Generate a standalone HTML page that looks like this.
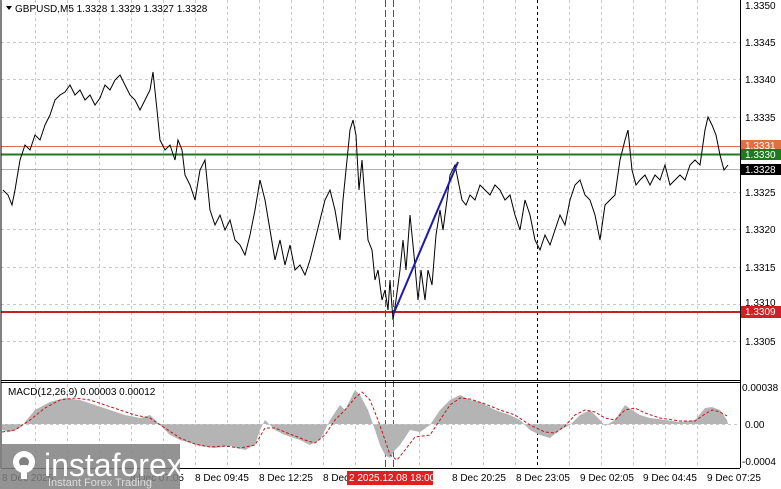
<!DOCTYPE html>
<html><head><meta charset="utf-8"><style>
html,body{margin:0;padding:0;background:#fff;width:781px;height:489px;overflow:hidden}
svg{display:block}
text{font-family:"Liberation Sans",sans-serif;font-size:10px;fill:#000}
</style></head><body>
<svg width="781" height="489" viewBox="0 0 781 489" xmlns="http://www.w3.org/2000/svg">
<rect width="781" height="489" fill="#fff"/>
<g stroke="#c8c8c8" stroke-dasharray="3,3" stroke-width="1">
<line x1="1" y1="42.5" x2="740" y2="42.5"/><line x1="1" y1="79.5" x2="740" y2="79.5"/><line x1="1" y1="117.5" x2="740" y2="117.5"/>
<line x1="1" y1="192.5" x2="740" y2="192.5"/><line x1="1" y1="229.5" x2="740" y2="229.5"/><line x1="1" y1="267.5" x2="740" y2="267.5"/><line x1="1" y1="304.5" x2="740" y2="304.5"/><line x1="1" y1="341.5" x2="740" y2="341.5"/>
</g>
<g stroke="#c8c8c8" stroke-dasharray="3,3" stroke-width="1">
<line x1="35.5" y1="0" x2="35.5" y2="468"/><line x1="67.5" y1="0" x2="67.5" y2="468"/><line x1="99.5" y1="0" x2="99.5" y2="468"/><line x1="131.5" y1="0" x2="131.5" y2="468"/><line x1="163.5" y1="0" x2="163.5" y2="468"/><line x1="195.5" y1="0" x2="195.5" y2="468"/><line x1="227.5" y1="0" x2="227.5" y2="468"/><line x1="259.5" y1="0" x2="259.5" y2="468"/><line x1="291.5" y1="0" x2="291.5" y2="468"/><line x1="323.5" y1="0" x2="323.5" y2="468"/><line x1="355.5" y1="0" x2="355.5" y2="468"/><line x1="419.5" y1="0" x2="419.5" y2="468"/><line x1="451.5" y1="0" x2="451.5" y2="468"/><line x1="483.5" y1="0" x2="483.5" y2="468"/><line x1="515.5" y1="0" x2="515.5" y2="468"/><line x1="569.5" y1="0" x2="569.5" y2="468"/><line x1="601.5" y1="0" x2="601.5" y2="468"/><line x1="633.5" y1="0" x2="633.5" y2="468"/><line x1="665.5" y1="0" x2="665.5" y2="468"/><line x1="697.5" y1="0" x2="697.5" y2="468"/>
</g>
<line x1="537.5" y1="0" x2="537.5" y2="468" stroke="#000" stroke-dasharray="3,3"/>
<line x1="1" y1="146.5" x2="740" y2="146.5" stroke="#e0704a" stroke-width="1"/>
<line x1="1" y1="154.5" x2="740" y2="154.5" stroke="#1e7a1e" stroke-width="2"/>
<line x1="1" y1="169.5" x2="740" y2="169.5" stroke="#b0b0b0" stroke-width="1"/>
<line x1="1" y1="312" x2="740" y2="312" stroke="#c82020" stroke-width="2"/>
<line x1="385.5" y1="0" x2="385.5" y2="468" stroke="#e01818" stroke-dasharray="7,3"/>
<line x1="393.5" y1="0" x2="393.5" y2="468" stroke="#e01818" stroke-dasharray="7,3"/>
<polyline fill="none" stroke="#000" stroke-width="1" points="3,190 8,195 12,205 15,190 20,160 25,145 30,150 35,135 40,140 45,125 50,115 55,100 60,95 65,92 70,85 75,95 80,90 85,100 90,95 95,105 100,98 105,85 110,90 115,80 120,75 125,85 130,95 135,100 140,110 145,100 150,90 153,72 157,110 160,140 165,150 170,145 175,160 178,140 182,150 185,175 190,185 195,200 200,170 205,160 210,210 215,225 220,215 225,230 230,220 235,240 240,245 245,255 250,235 255,210 260,180 265,200 270,230 275,260 280,240 285,265 290,245 295,270 300,265 305,275 310,260 315,240 320,220 325,200 330,190 335,210 340,240 343,200 347,160 350,130 353,120 356,135 359,190 362,160 365,200 368,240 372,250 375,280 378,270 382,300 385,290 388,310 390,280 393,320 396,300 400,270 403,240 406,270 410,215 414,255 418,300 421,270 425,300 428,270 432,285 436,235 440,210 443,230 447,200 450,175 455,165 458,180 462,200 466,205 470,195 475,200 480,185 485,190 490,195 495,185 500,190 505,200 510,195 515,215 520,230 525,200 530,215 535,240 540,250 545,235 550,245 555,230 560,215 565,225 570,200 575,185 580,180 585,195 590,200 595,215 600,240 605,205 610,200 615,195 620,160 625,140 628,130 632,170 636,185 640,180 645,175 650,185 655,175 660,180 665,165 670,185 675,180 680,175 685,180 690,165 695,160 700,165 705,130 708,117 712,125 716,135 720,155 724,170 728,165"/>
<line x1="393" y1="315" x2="458" y2="162" stroke="#1a1ab0" stroke-width="2"/>
<line x1="1" y1="0" x2="1" y2="468" stroke="#000"/>
<line x1="740.5" y1="0" x2="740.5" y2="468" stroke="#000"/>
<line x1="1" y1="380.5" x2="740" y2="380.5" stroke="#000"/>
<line x1="1" y1="382.5" x2="740" y2="382.5" stroke="#000"/>
<line x1="1" y1="468.5" x2="740" y2="468.5" stroke="#000"/>
<polygon fill="#b4b4b4" points="2,424 2,430 10,432 20,428 35,410 50,402 65,398 80,400 95,405 110,410 125,415 140,418 150,415 160,425 170,435 180,440 200,446 215,448 230,446 245,450 255,445 260,430 265,420 275,430 285,435 300,440 310,445 320,440 330,420 340,405 345,410 350,400 355,390 360,395 368,410 375,430 380,445 385,455 390,458 395,450 400,445 410,430 420,432 430,425 440,410 450,400 460,395 470,400 480,402 495,410 510,415 520,420 530,430 540,435 550,438 560,430 570,425 580,415 590,410 600,420 605,426 615,420 625,405 632,410 640,415 650,418 665,420 680,422 695,420 705,408 712,407 720,410 727,420 728,424"/>
<line x1="2" y1="424.5" x2="740" y2="424.5" stroke="#c8c8c8" stroke-dasharray="3,3"/>
<polyline fill="none" stroke="#c01818" stroke-dasharray="3,2" points="2,432 15,430 30,420 45,408 60,400 75,398 90,400 105,405 120,410 135,415 150,418 165,428 180,438 195,444 210,447 225,446 240,448 255,445 265,428 275,428 290,434 305,440 315,443 325,435 335,420 345,410 355,398 362,392 370,400 378,420 385,440 390,455 397,460 405,450 415,437 430,435 440,420 450,405 460,398 470,399 485,404 500,410 515,415 530,425 545,432 555,433 565,426 575,415 585,410 595,412 605,418 615,420 625,410 635,408 645,413 660,418 680,421 695,421 705,414 712,410 720,412 727,416"/>
<g font-size="9">
<text x="745" y="9">1.3350</text><text x="745" y="46">1.3345</text><text x="745" y="83">1.3340</text><text x="745" y="121">1.3335</text><text x="745" y="196">1.3325</text><text x="745" y="233">1.3320</text><text x="745" y="271">1.3315</text><text x="745" y="306">1.3310</text><text x="745" y="345">1.3305</text>
<text x="742" y="391">0.00038</text><text x="745" y="428">0.00</text><text x="742" y="465">-0.0004</text>
</g>
<rect x="741" y="140" width="40" height="11" fill="#e07040"/><text x="745" y="149" style="fill:#fff">1.3331</text>
<rect x="741" y="149" width="40" height="11" fill="#1e7a1e"/><text x="745" y="158" style="fill:#fff">1.3330</text>
<rect x="741" y="164" width="40" height="11" fill="#000"/><text x="745" y="173" style="fill:#fff">1.3328</text>
<rect x="741" y="306" width="40" height="12" fill="#d02020"/><text x="745" y="315" style="fill:#fff">1.3309</text>
<text x="15" y="12">GBPUSD,M5  1.3328 1.3329 1.3327 1.3328</text>
<polygon points="6,6 12,6 9,10" fill="#000"/>
<text x="8" y="395">MACD(12,26,9) 0.00003 0.00012</text>
<g font-size="10">
<text x="2" y="481">8 Dec 2025</text><text x="130" y="481">8 Dec 07:05</text><text x="195" y="481">8 Dec 09:45</text><text x="259" y="481">8 Dec 12:25</text><text x="323" y="481">8 Dec</text><text x="452" y="481">8 Dec 20:25</text><text x="516" y="481">8 Dec 23:05</text><text x="580" y="481">9 Dec 02:05</text><text x="643" y="481">9 Dec 04:45</text><text x="707" y="481">9 Dec 07:25</text>
</g>
<rect x="347" y="471" width="86" height="14" fill="#e02020"/><text x="349" y="481" style="fill:#fff">2 2025.12.08 18:00</text>
<rect x="0" y="444" width="180" height="45" fill="#808080" opacity="0.85"/>
<g fill="#fff">
<circle cx="24" cy="462" r="11"/>
<circle cx="24" cy="462" r="5" fill="#808080"/>
<rect x="21" y="465" width="6" height="14"/>
</g>
<text x="44" y="476" style="font-size:32px;fill:#fff">instaforex</text>
<text x="48" y="486" style="font-size:11px;fill:#ddd">Instant Forex Trading</text>
</svg>
</body></html>
